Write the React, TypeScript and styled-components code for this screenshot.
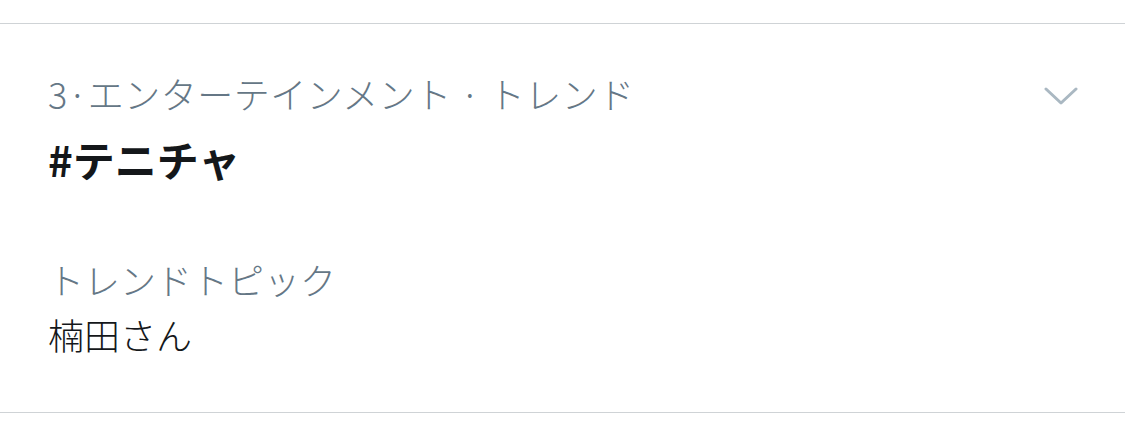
import React, { FC } from 'react';
import styled, { createGlobalStyle } from 'styled-components';

const GlobalStyle = createGlobalStyle`
  html, body {
    margin: 0;
    padding: 0;
    background: #ffffff;
  }
  body {
    font-family: "Noto Sans CJK JP", "Noto Sans", sans-serif;
  }
`;

const Page = styled.div`
  width: 1125px;
  height: 431px;
  padding-top: 23px;
  box-sizing: border-box;
  background: #fff;
`;

const StyledTrend = styled.div`
  display: flex;
  align-items: flex-start;
  border-top: 1px solid #cfd3d6;
  border-bottom: 1px solid #cfd3d6;
  padding: 45px 47px 54px 48px;

  .Trend__body {
    flex: 1;
    display: flex;
    flex-flow: column;
  }

  .Trend__meta {
    font-size: 36px;
    line-height: 48px;
    font-weight: 300;
    letter-spacing: 0.5px;
    color: #657786;
    white-space: nowrap;
  }

  .Trend__name {
    margin-top: 18px;
    font-size: 42px;
    line-height: 48px;
    font-weight: 700;
    color: #14171a;
  }

  .Trend__topic {
    margin-top: 72px;
    font-size: 36px;
    line-height: 48px;
    font-weight: 300;
    color: #657786;
  }

  .Trend__context {
    margin-top: 7px;
    font-size: 36px;
    line-height: 48px;
    font-weight: 300;
    color: #14171a;
  }

  .Trend__caret {
    margin-top: 18px;
    width: 34px;
    height: 18px;
    color: #aab8c2;
  }
`;

interface TrendProps {
  rank: number;
  category: string;
  name: string;
  topicLabel: string;
  context: string;
}

const Trend: FC<TrendProps> = ({ rank, category, name, topicLabel, context }) => (
  <StyledTrend>
    <div className="Trend__body">
      <div className="Trend__meta">
        {rank}·{category} · トレンド
      </div>
      <div className="Trend__name">{name}</div>
      <div className="Trend__topic">{topicLabel}</div>
      <div className="Trend__context">{context}</div>
    </div>
    <svg className="Trend__caret" viewBox="0 0 34 18" fill="none">
      <path d="M2 2 L17 16 L32 2" stroke="currentColor" strokeWidth="3" strokeLinecap="round" strokeLinejoin="round" />
    </svg>
  </StyledTrend>
);

const App: FC = () => (
  <Page>
    <GlobalStyle />
    <Trend
      rank={3}
      category="エンターテインメント"
      name="#テニチャ"
      topicLabel="トレンドトピック"
      context="楠田さん"
    />
  </Page>
);

export default App;
